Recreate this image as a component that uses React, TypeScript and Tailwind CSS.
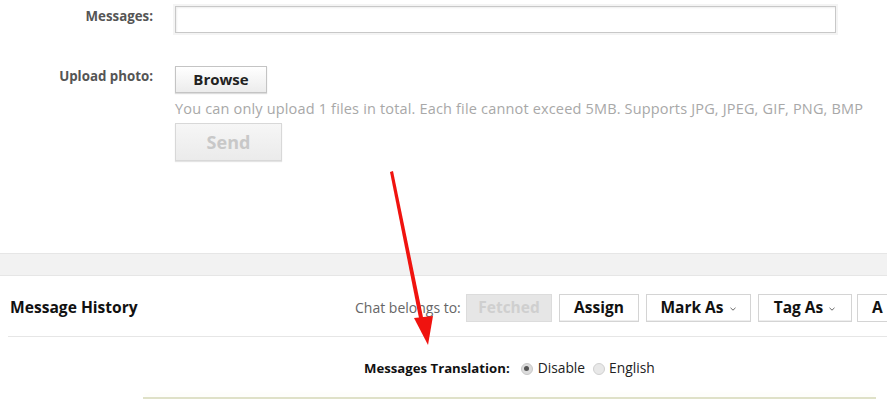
import React from "react";

function Chevron() {
  return (
    <svg width="8" height="6" viewBox="0 0 8 6" className="ml-[5px] mt-[2px]">
      <path d="M1.5 1.8 L4 4.2 L6.5 1.8" fill="none" stroke="#666" strokeWidth="1" />
    </svg>
  );
}

function Btn({ children, w, disabled }: { children: React.ReactNode; w: string; disabled?: boolean }) {
  return (
    <div
      className={
        "h-[28px] flex items-center justify-center border text-[15.5px] font-bold shrink-0 " +
        w +
        (disabled
          ? " bg-[#e6e6e6] border-[#dcdcdc] text-[#cfcfcf]"
          : " bg-white border-[#d4d4d4] text-[#111] shadow-[inset_0_-1px_0_#eee]")
      }
    >
      {children}
    </div>
  );
}

export default function App() {
  return (
    <div
      className="relative w-[887px] h-[411px] overflow-hidden bg-white"
      style={{ fontFamily: '"Open Sans", "Noto Sans", Arial, sans-serif' }}
    >
      {/* Form area */}
      <div className="pt-[6px] h-[253px]">
        <div className="flex">
          <div className="w-[153px] shrink-0 text-right text-[13.3px] font-bold text-[#555] pt-[1px] leading-[18px]">Messages:</div>
          <div className="ml-[22px] w-[661px] h-[27px] border border-[#c8c8c8] bg-white shadow-[inset_1px_1px_2px_#eee,0_0_0_2px_#f4f4f4]" />
        </div>
        <div className="flex mt-[33px]">
          <div className="w-[153px] shrink-0 text-right text-[13.3px] font-bold text-[#555] pt-[1px] leading-[18px]">Upload photo:</div>
          <div className="ml-[22px] flex flex-col items-start">
            <div className="w-[92px] h-[27px] border border-[#c4c4c4] bg-gradient-to-b from-white to-[#ececec] flex items-center justify-center text-[15px] font-bold text-[#222] shadow-[0_1px_1px_#ddd]">
              Browse
            </div>
            <div className="mt-[5px] text-[14.5px] text-[#a8a8a8] leading-[21px] whitespace-nowrap tracking-[0.17px]">
              You can only upload 1 files in total. Each file cannot exceed 5MB. Supports JPG, JPEG, GIF, PNG, BMP
            </div>
            <div className="mt-[4px] w-[107px] h-[38px] border border-[#d8d8d8] bg-gradient-to-b from-[#f6f6f6] to-[#ebebeb] flex items-center justify-center text-[18px] font-bold text-[#c8c8c8] shadow-[0_1px_1px_#e4e4e4]">
              Send
            </div>
          </div>
        </div>
      </div>

      {/* Gray band */}
      <div className="h-[23px] bg-[#f2f2f2] border-t border-b border-[#e6e6e6]" />

      {/* Message History header */}
      <div className="flex items-center h-[60px] pl-[10px] pt-[3px]">
        <div className="text-[15.6px] font-bold text-[#111] w-[345px] shrink-0">Message History</div>
        <div className="text-[14px] text-[#666] whitespace-nowrap shrink-0 w-[106px]">Chat belongs to:</div>
        <div className="flex gap-[7px] ml-[5px] shrink-0">
          <Btn w="w-[86px]" disabled>Fetched</Btn>
          <Btn w="w-[80px]">Assign</Btn>
          <Btn w="w-[105px]">
            Mark As
            <Chevron />
          </Btn>
          <Btn w="w-[94px]">
            Tag As
            <Chevron />
          </Btn>
          <div className="-ml-[2px] h-[28px] w-[60px] border border-[#d4d4d4] bg-white text-[15.5px] font-bold text-[#111] flex items-center pl-[14px] shrink-0">A</div>
        </div>
      </div>
      <div className="ml-[8px] border-t border-[#e6e6e6]" />

      {/* Translation row */}
      <div className="flex items-center h-[60px] pl-[364px] pt-[3px] text-[13px]">
        <span className="font-bold text-[#111] text-[13.2px]">Messages Translation:</span>
        <span className="ml-[11px] w-[12px] h-[12px] rounded-full bg-[#dcdcdc] border border-[#c8c8c8] flex items-center justify-center">
          <span className="w-[5px] h-[5px] rounded-full bg-[#555]" />
        </span>
        <span className="ml-[5px] text-[#222] text-[13.8px]">Disable</span>
        <span className="ml-[8px] w-[12px] h-[12px] rounded-full bg-[#e8e8e8] border border-[#d0d0d0]" />
        <span className="ml-[4px] text-[#222] text-[13.8px]">English</span>
      </div>
      <div className="ml-[143px] mr-[11px] h-[2px] bg-[#dfe1c7] shadow-[0_-3px_5px_#fbfbef]" />

      {/* Red arrow annotation */}
      <svg className="absolute left-0 top-0 pointer-events-none" width="887" height="411">
        <polygon points="390,172 393,171 424,322 420,323" fill="#f0130f" />
        <polygon points="414,318 433,316 428,345" fill="#f0130f" />
      </svg>
    </div>
  );
}
